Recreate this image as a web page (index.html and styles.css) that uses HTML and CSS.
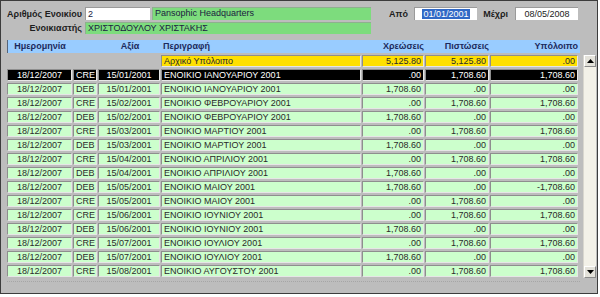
FILE: index.html
```html
<!DOCTYPE html>
<html lang="el">
<head>
    <meta charset="UTF-8">
    <meta name="viewport" content="width=device-width, initial-scale=1.0">
    <title>Καρτέλα Ενοικίου</title>
    <link rel="stylesheet" href="styles.css">
</head>
<body>
    <div class="frame">
        <div class="form-row row-top">
            <label class="lbl lbl-main">Αριθμός Ενοικίου</label>
            <span class="field field-white field-code">2</span>
            <span class="field field-green field-name">Pansophic Headquarters</span>
            <label class="lbl lbl-from">Από</label>
            <span class="field field-white field-date"><span class="sel">01/01/2001</span></span>
            <label class="lbl lbl-to">Μέχρι</label>
            <span class="field field-white field-date">08/05/2008</span>
        </div>
        <div class="form-row row-second">
            <label class="lbl lbl-main">Ενοικιαστής</label>
            <span class="field field-green field-tenant">ΧΡΙΣΤΟΔΟΥΛΟΥ ΧΡΙΣΤΑΚΗΣ</span>
        </div>

        <div class="ledger">
            <div class="ledger-table">
                <div class="ledger-head">
                    <span class="c-center">Ημερομηνία</span>
                    <span></span>
                    <span class="c-center">Αξία</span>
                    <span>Περιγραφή</span>
                    <span class="c-num">Χρεώσεις</span>
                    <span class="c-num">Πιστώσεις</span>
                    <span class="c-num">Υπόλοιπο</span>
                </div>
                <div class="ledger-row row-opening">
                    <span class="blank"></span>
                    <span class="blank"></span>
                    <span class="blank"></span>
                    <span class="cell">Αρχικό Υπόλοιπο</span>
                    <span class="cell c-num">5,125.80</span>
                    <span class="cell c-num">5,125.80</span>
                    <span class="cell c-num">.00</span>
                </div>
                <div id="rows"></div>
            </div>
            <div class="scrollbar">
                <span class="scroll-btn">
                    <svg width="7" height="4" viewBox="0 0 7 4"><polygon points="3.5,0 7,4 0,4" fill="#000"/></svg>
                </span>
                <span class="scroll-btn">
                    <svg width="7" height="4" viewBox="0 0 7 4"><polygon points="0,0 7,0 3.5,4" fill="#000"/></svg>
                </span>
            </div>
        </div>
    </div>

    <script>
        // Ledger movements (type, value date, month, debit, credit, balance)
        const movements = [
            ['CRE', '15/01/2001', 'ΙΑΝΟΥΑΡΙΟΥ', '.00', '1,708.60', '1,708.60'],
            ['DEB', '15/01/2001', 'ΙΑΝΟΥΑΡΙΟΥ', '1,708.60', '.00', '.00'],
            ['CRE', '15/02/2001', 'ΦΕΒΡΟΥΑΡΙΟΥ', '.00', '1,708.60', '1,708.60'],
            ['DEB', '15/02/2001', 'ΦΕΒΡΟΥΑΡΙΟΥ', '1,708.60', '.00', '.00'],
            ['CRE', '15/03/2001', 'ΜΑΡΤΙΟΥ', '.00', '1,708.60', '1,708.60'],
            ['DEB', '15/03/2001', 'ΜΑΡΤΙΟΥ', '1,708.60', '.00', '.00'],
            ['CRE', '15/04/2001', 'ΑΠΡΙΛΙΟΥ', '.00', '1,708.60', '1,708.60'],
            ['DEB', '15/04/2001', 'ΑΠΡΙΛΙΟΥ', '1,708.60', '.00', '.00'],
            ['DEB', '15/05/2001', 'ΜΑΙΟΥ', '1,708.60', '.00', '-1,708.60'],
            ['CRE', '15/05/2001', 'ΜΑΙΟΥ', '.00', '1,708.60', '.00'],
            ['CRE', '15/06/2001', 'ΙΟΥΝΙΟΥ', '.00', '1,708.60', '1,708.60'],
            ['DEB', '15/06/2001', 'ΙΟΥΝΙΟΥ', '1,708.60', '.00', '.00'],
            ['CRE', '15/07/2001', 'ΙΟΥΛΙΟΥ', '.00', '1,708.60', '1,708.60'],
            ['DEB', '15/07/2001', 'ΙΟΥΛΙΟΥ', '1,708.60', '.00', '.00'],
            ['CRE', '15/08/2001', 'ΑΥΓΟΥΣΤΟΥ', '.00', '1,708.60', '1,708.60']
        ];

        const rows = document.getElementById('rows');

        movements.forEach((m, i) => {
            const row = document.createElement('div');
            row.className = 'ledger-row' + (i === 0 ? ' row-current' : '');
            row.innerHTML =
                `<span class="cell c-center">18/12/2007</span>` +
                `<span class="cell">${m[0]}</span>` +
                `<span class="cell c-center">${m[1]}</span>` +
                `<span class="cell">ΕΝΟΙΚΙΟ ${m[2]} 2001</span>` +
                `<span class="cell c-num">${m[3]}</span>` +
                `<span class="cell c-num">${m[4]}</span>` +
                `<span class="cell c-num">${m[5]}</span>`;
            rows.appendChild(row);
        });
    </script>
</body>
</html>
```

FILE: styles.css
```css
body {
    margin: 0;
    background-color: #fff;
    font-family: "Liberation Sans", Arial, sans-serif;
    font-size: 9px;
    color: #2a2a2a;
}
.frame {
    box-sizing: border-box;
    width: 598px;
    height: 294px;
    border: 1px solid #3c3c3c;
    background-color: #bdbdbd;
    padding: 6px 0 0 0;
}
.form-row {
    display: flex;
    align-items: center;
}
.row-top {
    height: 13px;
}
.row-second {
    height: 12px;
    margin-top: 2px;
}
.lbl {
    font-weight: bold;
    color: #1e1e1e;
    white-space: nowrap;
}
.lbl-main {
    width: 81px;
    text-align: right;
    margin-right: 3px;
}
.lbl-from {
    width: 37px;
    text-align: right;
    padding-right: 6px;
}
.lbl-to {
    width: 31px;
    text-align: right;
    padding-right: 7px;
}
.field {
    box-sizing: border-box;
    height: 100%;
    line-height: 12px;
    padding: 0 2px;
    white-space: nowrap;
    overflow: hidden;
    color: #1a1a40;
}
.field-white {
    background-color: #fff;
    border-top: 1px solid #9a9a9a;
    border-left: 1px solid #9a9a9a;
}
.field-green {
    background-color: #7ddc7d;
    border-top: 1px solid #8fb08f;
    border-left: 1px solid #8fb08f;
    line-height: 11px;
}
.field-code {
    width: 65px;
    margin-right: 2px;
}
.field-name {
    width: 219px;
}
.field-tenant {
    width: 286px;
}
.field-date {
    width: 63px;
    text-align: center;
    color: #222;
}
.sel {
    background-color: #3169c6;
    color: #fff;
    padding: 0 1px;
}
.ledger {
    display: flex;
    margin: 6px 0 0 6px;
}
.ledger-table {
    width: 573px;
    padding-bottom: 2px;
    border-bottom: 1px dotted #a6a6a6;
}
.ledger-head,
.ledger-row {
    display: grid;
    grid-template-columns: 65px 24px 62px 200px 62px 64px 88px;
    column-gap: 1px;
}
.ledger-head {
    height: 13px;
    line-height: 13px;
    background-color: #99ccff;
    border-left: 1px solid #56657a;
    font-weight: bold;
    color: #1c2a5c;
    margin-bottom: 2px;
}
.ledger-head span {
    padding: 0 1px;
}
.ledger-head span:first-child {
    margin-left: -1px;
}
.ledger-row {
    height: 12px;
    margin-bottom: 2px;
}
.cell {
    box-sizing: border-box;
    line-height: 10px;
    padding: 0 2px;
    white-space: nowrap;
    overflow: hidden;
    background-color: #ccffcc;
    border: 1px solid;
    border-color: #8e8e8e #e6e6e6 #e6e6e6 #8e8e8e;
}
.c-center {
    text-align: center;
}
.c-num {
    text-align: right;
}
.row-opening .cell {
    background-color: #ffe000;
}
.row-current .cell {
    background-color: #000;
    color: #fff;
}
.scrollbar {
    box-sizing: border-box;
    width: 13px;
    height: 223px;
    margin: 15px 0 0 3px;
    background-color: #f3f1e8;
    border-left: 1px solid #d8d6ce;
    display: flex;
    flex-direction: column;
    justify-content: space-between;
}
.scroll-btn {
    display: flex;
    align-items: center;
    justify-content: center;
    height: 12px;
    background-color: #e4e2da;
    border: 1px solid;
    border-color: #fff #8a8a8a #8a8a8a #fff;
    box-sizing: border-box;
}
```
